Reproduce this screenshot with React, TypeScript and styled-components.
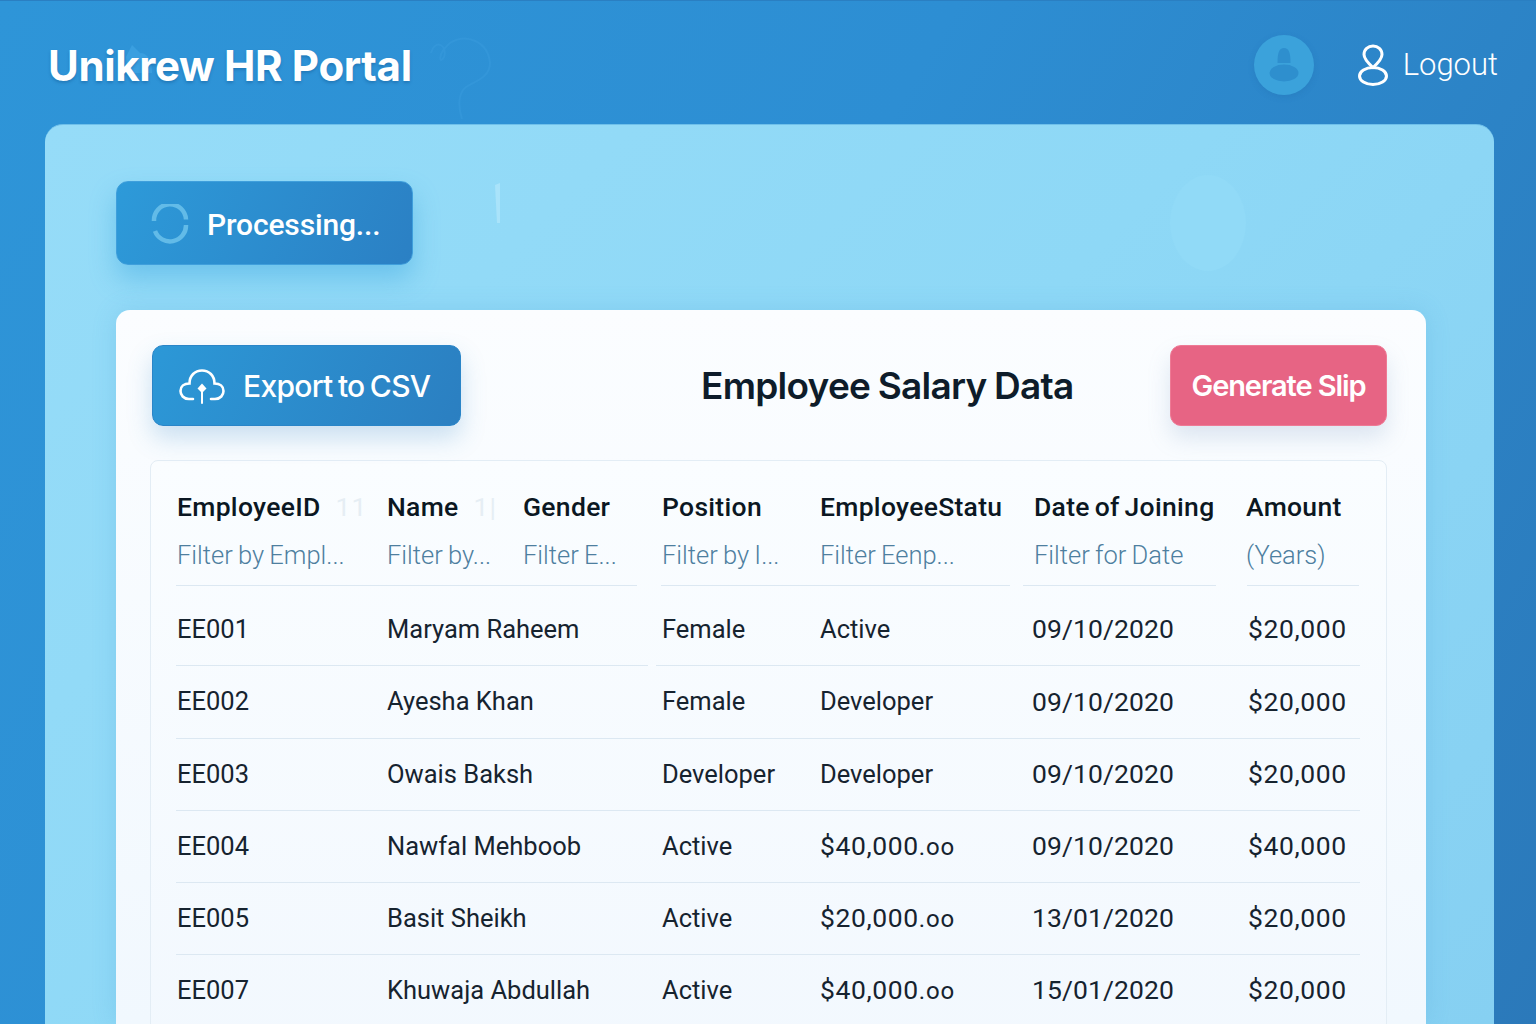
import styled, { createGlobalStyle } from 'styled-components';

const GlobalStyle = createGlobalStyle`
  html, body { margin: 0; padding: 0; }
  body { font-family: Roboto, "Liberation Sans", sans-serif; }
  * { box-sizing: border-box; }
`;

const Page = styled.div`
  position: relative;
  width: 1536px;
  height: 1024px;
  overflow: hidden;
  display: flex;
  flex-direction: column;
  border-top: 1px solid #2a7fc2;
  background: linear-gradient(120deg, #2e95d8 0%, #2d8ed3 45%, #2b79ba 100%);
`;

const Header = styled.header`
  position: relative;
  z-index: 1;
  height: 123px;
  flex: none;
  display: flex;
  align-items: center;
  padding: 6px 38px 0 48px;
`;

const Brand = styled.h1`
  margin: 0;
  font-family: Inter, sans-serif;
  font-size: 42px;
  font-weight: 700;
  letter-spacing: -0.35px;
  color: #fff;
  text-shadow: 0 2px 3px rgba(20, 90, 150, 0.45);
`;

const HeaderRight = styled.div`
  margin-left: auto;
  margin-top: -2px;
  display: flex;
  align-items: center;
`;

const Avatar = styled.div`
  width: 60px;
  height: 60px;
  border-radius: 50%;
  background: #3ba2db;
  display: flex;
  align-items: center;
  justify-content: center;
  box-shadow: 0 2px 6px rgba(30, 100, 160, 0.2);
  margin-right: 44px;
`;

const LogoutLink = styled.a`
  display: flex;
  align-items: center;
  gap: 15px;
  color: #fff;
  font-family: Roboto, sans-serif;
  font-size: 31px;
  font-weight: 300;
  text-decoration: none;
`;

const Ghost = styled.svg<{ $x: number; $y: number }>`
  position: absolute;
  left: ${(p) => p.$x}px;
  top: ${(p) => p.$y}px;
  pointer-events: none;
`;

const Panel = styled.main`
  flex: 1;
  min-height: 0;
  margin: 0 42px 0 45px;
  padding: 56px 68px 0 71px;
  display: flex;
  flex-direction: column;
  align-items: stretch;
  border-radius: 18px 18px 0 0;
  border-top: 1px solid #6fc0ea;
  background: linear-gradient(135deg, #96dcf8 0%, #8ed8f6 50%, #86d0f2 100%);
`;

const ProcessingButton = styled.button`
  align-self: flex-start;
  width: 297px;
  height: 84px;
  display: flex;
  align-items: center;
  gap: 18px;
  padding: 2px 0 0 34px;
  border: 1px solid #3f9fdc;
  border-radius: 12px;
  color: #fff;
  font-family: Roboto, sans-serif;
  font-size: 30px;
  font-weight: 500;
  letter-spacing: -0.15px;
  background: linear-gradient(115deg, #2d9ad9 0%, #2b80c4 100%);
  box-shadow: 0 14px 26px rgba(50, 160, 220, 0.4);
`;

const Card = styled.section`
  flex: 1;
  min-height: 0;
  margin-top: 45px;
  padding: 35px 39px 0 36px;
  border-radius: 14px 14px 0 0;
  background: linear-gradient(180deg, #fbfdff 0%, #f1f8fe 100%);
  box-shadow: 0 0 24px rgba(60, 150, 210, 0.2);
`;

const Toolbar = styled.div`
  display: flex;
  align-items: center;
`;

const ExportButton = styled.button`
  width: 309px;
  height: 81px;
  display: flex;
  align-items: center;
  gap: 18px;
  padding: 0 0 0 26px;
  border: 1px solid #2a85c8;
  border-radius: 11px;
  color: #fff;
  font-family: Inter, sans-serif;
  font-size: 30px;
  font-weight: 500;
  letter-spacing: -0.7px;
  word-spacing: -2px;
  background: linear-gradient(115deg, #2c98d7 0%, #2b7fc1 100%);
  box-shadow: 0 12px 24px rgba(60, 140, 200, 0.25);
`;

const Title = styled.h2`
  margin: 0 0 0 240px;
  font-family: Inter, sans-serif;
  font-size: 37px;
  font-weight: 600;
  letter-spacing: -0.75px;
  word-spacing: -1px;
  color: #0e1c2a;
`;

const SlipButton = styled.button`
  margin-left: auto;
  width: 217px;
  height: 81px;
  border: 1px solid #ee7a95;
  border-radius: 11px;
  color: #fff;
  font-family: Inter, sans-serif;
  font-size: 29px;
  font-weight: 600;
  letter-spacing: -1.1px;
  background: #e76484;
  box-shadow: 0 12px 22px rgba(120, 150, 190, 0.22);
`;

const TableBox = styled.div`
  margin-top: 34px;
  margin-left: -2px;
  height: 600px;
  padding: 0 26px 0 25px;
  border: 1px solid #e3edf5;
  border-radius: 8px;
  background: linear-gradient(180deg, #fafdff 0%, #f2f8fe 100%);
`;

const HeadRow = styled.div`
  display: grid;
  grid-template-columns: 210px 136px 139px 158px 214px 212px 1fr;
  padding: 28px 0 0 1px;
`;

const HeadCell = styled.div`
  display: flex;
  flex-direction: column;
  gap: 14px;
`;

const HeadLabel = styled.div`
  display: flex;
  align-items: baseline;
  gap: 15px;
  height: 36px;
  line-height: 36px;
  font-family: Roboto, sans-serif;
  font-size: 26.5px;
  font-weight: 500;
  letter-spacing: 0.3px;
  word-spacing: -2px;
  color: #0b1722;
  white-space: nowrap;
`;

const SortHint = styled.span`
  color: #e6eef4;
  font-weight: 400;
  letter-spacing: 1px;
`;

const FilterText = styled.div`
  height: 32px;
  line-height: 32px;
  font-family: Roboto, sans-serif;
  font-size: 25.5px;
  font-weight: 300;
  word-spacing: -1px;
  color: #4e7f9f;
  white-space: nowrap;
`;

const HeadRule = styled.div`
  display: flex;
  margin-top: 14px;
  height: 1px;
`;

const RuleSegment = styled.span<{ $left: number; $width: number }>`
  margin-left: ${(p) => p.$left}px;
  width: ${(p) => p.$width}px;
  background: #dce8f2;
`;

const Row = styled.div<{ $height: number; $top?: number; $split?: boolean }>`
  position: relative;
  display: grid;
  grid-template-columns: 210px 275px 158px 212px 216px 1fr;
  align-items: center;
  height: ${(p) => p.$height}px;
  padding: ${(p) => p.$top ?? 0}px 0 0 1px;
  border-bottom: 1px solid #dce8f2;

  ${(p) =>
    p.$split &&
    `&::after {
      content: '';
      position: absolute;
      left: 472px;
      bottom: -1px;
      width: 8px;
      height: 1px;
      background: #f9fcff;
    }`}
`;

const Cell = styled.div`
  margin-bottom: 2px;
  font-family: Roboto, sans-serif;
  font-size: 25.5px;
  font-weight: 400;
  color: #16232f;
  white-space: nowrap;
`;

const DateCell = styled(Cell)`
  font-size: 26.5px;
  letter-spacing: 0.1px;
`;

const MoneyCell = styled(Cell)`
  font-size: 26.5px;
  letter-spacing: 0.6px;
`;

const Cents = styled.span`
  font-size: 24px;
  letter-spacing: 0.8px;
`;

function SpinnerIcon() {
  return (
    <svg width="38" height="40" viewBox="0 0 38 40" fill="none" stroke="#62bbe8" strokeWidth="4.5">
      <path d="M3 17 A16 16 0 0 1 35 15.5" />
      <path d="M35 21 A16 16 0 0 1 4 27" />
    </svg>
  );
}

function CloudIcon() {
  return (
    <svg width="46" height="36" viewBox="0 0 46 36" fill="none" stroke="#fff" strokeWidth="2.6" strokeLinecap="round">
      <path d="M14 31 H10 C4.5 31 1.5 27 1.5 23 C1.5 18.5 5 15.5 10.5 15.5 C10.5 7.5 16 2.5 23 2.5 C30 2.5 35.5 7.5 35.5 15.5 C41 15.5 44.5 18.5 44.5 23 C44.5 27 41.5 31 36 31 H32" />
      <path d="M23 21 V35" strokeWidth="2" />
      <path d="M23 15.5 L27.5 20.5 L23 25 L18.5 20.5 Z" fill="#fff" stroke="none" />
    </svg>
  );
}

function UserOutlineIcon() {
  return (
    <svg width="30" height="42" viewBox="0 0 30 42" fill="none" stroke="#fff" strokeWidth="3">
      <path d="M15 23.5 C10 19 6 14.5 6 10.5 C6 5.5 10 2 15 2 C20 2 24 5.5 24 10.5 C24 14.5 20 19 15 23.5 Z" />
      <ellipse cx="15" cy="32" rx="13.5" ry="8.5" />
    </svg>
  );
}

function UserFillIcon() {
  return (
    <svg width="30" height="34" viewBox="0 0 30 34" fill="#2e8fce">
      <path d="M8.5 15 C8.5 5 10 0 15 0 C20 0 21.5 5 21.5 15 Z" />
      <ellipse cx="15" cy="25" rx="14.5" ry="8.5" />
    </svg>
  );
}

const columns = [
  { label: 'EmployeeID', hint: '11', filter: 'Filter by Empl...' },
  { label: 'Name', hint: '1|', filter: 'Filter by...' },
  { label: 'Gender', filter: 'Filter E...' },
  { label: 'Position', filter: 'Filter by I...' },
  { label: 'EmployeeStatu', filter: 'Filter Eenp...' },
  { label: 'Date of Joining', filter: 'Filter for Date' },
  { label: 'Amount', filter: '(Years)' },
];

const employees = [
  { id: 'EE001', name: 'Maryam Raheem', position: 'Female', status: 'Active', date: '09/10/2020', amount: '$20,000', height: 80 },
  { id: 'EE002', name: 'Ayesha Khan', position: 'Female', status: 'Developer', date: '09/10/2020', amount: '$20,000', height: 73 },
  { id: 'EE003', name: 'Owais Baksh', position: 'Developer', status: 'Developer', date: '09/10/2020', amount: '$20,000', height: 72 },
  { id: 'EE004', name: 'Nawfal Mehboob', position: 'Active', status: '$40,000', cents: true, date: '09/10/2020', amount: '$40,000', height: 72 },
  { id: 'EE005', name: 'Basit Sheikh', position: 'Active', status: '$20,000', cents: true, date: '13/01/2020', amount: '$20,000', height: 72 },
  { id: 'EE007', name: 'Khuwaja Abdullah', position: 'Active', status: '$40,000', cents: true, date: '15/01/2020', amount: '$20,000', height: 72 },
];

export default function App() {
  return (
    <>
      <GlobalStyle />
      <Page>
        <Ghost $x={428} $y={34} width="66" height="90" viewBox="0 0 66 90" fill="none" stroke="#3396d9" strokeWidth="2">
          <path d="M3 18 C8 2 20 12 16 22 C12 30 8 20 22 8 C38 -2 60 6 62 28 C62 42 48 46 38 52 C30 58 30 72 34 84" />
        </Ghost>
        <Ghost $x={122} $y={42} width="34" height="34" viewBox="0 0 34 34" fill="#3a9fe0">
          <path d="M4 14 L10 2 L18 10 C26 10 30 18 30 30 L6 30 Z" />
        </Ghost>
        <Ghost $x={1168} $y={172} width="80" height="100" viewBox="0 0 80 100" fill="#91daf7">
          <ellipse cx="40" cy="50" rx="38" ry="48" />
        </Ghost>
        <Ghost $x={492} $y={182} width="12" height="42" viewBox="0 0 12 42" fill="#a9e3fa">
          <path d="M3 2 L8 0 L8 40 L5 40 Z" />
        </Ghost>
        <Header>
          <Brand>Unikrew HR Portal</Brand>
          <HeaderRight>
            <Avatar>
              <UserFillIcon />
            </Avatar>
            <LogoutLink href="#">
              <UserOutlineIcon />
              Logout
            </LogoutLink>
          </HeaderRight>
        </Header>
        <Panel>
          <ProcessingButton>
            <SpinnerIcon />
            Processing...
          </ProcessingButton>
          <Card>
            <Toolbar>
              <ExportButton>
                <CloudIcon />
                Export to CSV
              </ExportButton>
              <Title>Employee Salary Data</Title>
              <SlipButton>Generate Slip</SlipButton>
            </Toolbar>
            <TableBox>
              <HeadRow>
                {columns.map((col) => (
                  <HeadCell key={col.label}>
                    <HeadLabel>
                      {col.label}
                      {col.hint && <SortHint>{col.hint}</SortHint>}
                    </HeadLabel>
                    <FilterText>{col.filter}</FilterText>
                  </HeadCell>
                ))}
              </HeadRow>
              <HeadRule>
                <RuleSegment $left={0} $width={461} />
                <RuleSegment $left={24} $width={349} />
                <RuleSegment $left={13} $width={193} />
                <RuleSegment $left={31} $width={112} />
              </HeadRule>
              {employees.map((emp, i) => (
                <Row key={emp.id} $height={emp.height} $top={i === 0 ? 8 : 0} $split={i === 0}>
                  <Cell>{emp.id}</Cell>
                  <Cell>{emp.name}</Cell>
                  <Cell>{emp.position}</Cell>
                  {emp.cents ? (
                    <MoneyCell>
                      {emp.status}
                      <Cents>.oo</Cents>
                    </MoneyCell>
                  ) : (
                    <Cell>{emp.status}</Cell>
                  )}
                  <DateCell>{emp.date}</DateCell>
                  <MoneyCell>{emp.amount}</MoneyCell>
                </Row>
              ))}
            </TableBox>
          </Card>
        </Panel>
      </Page>
    </>
  );
}
